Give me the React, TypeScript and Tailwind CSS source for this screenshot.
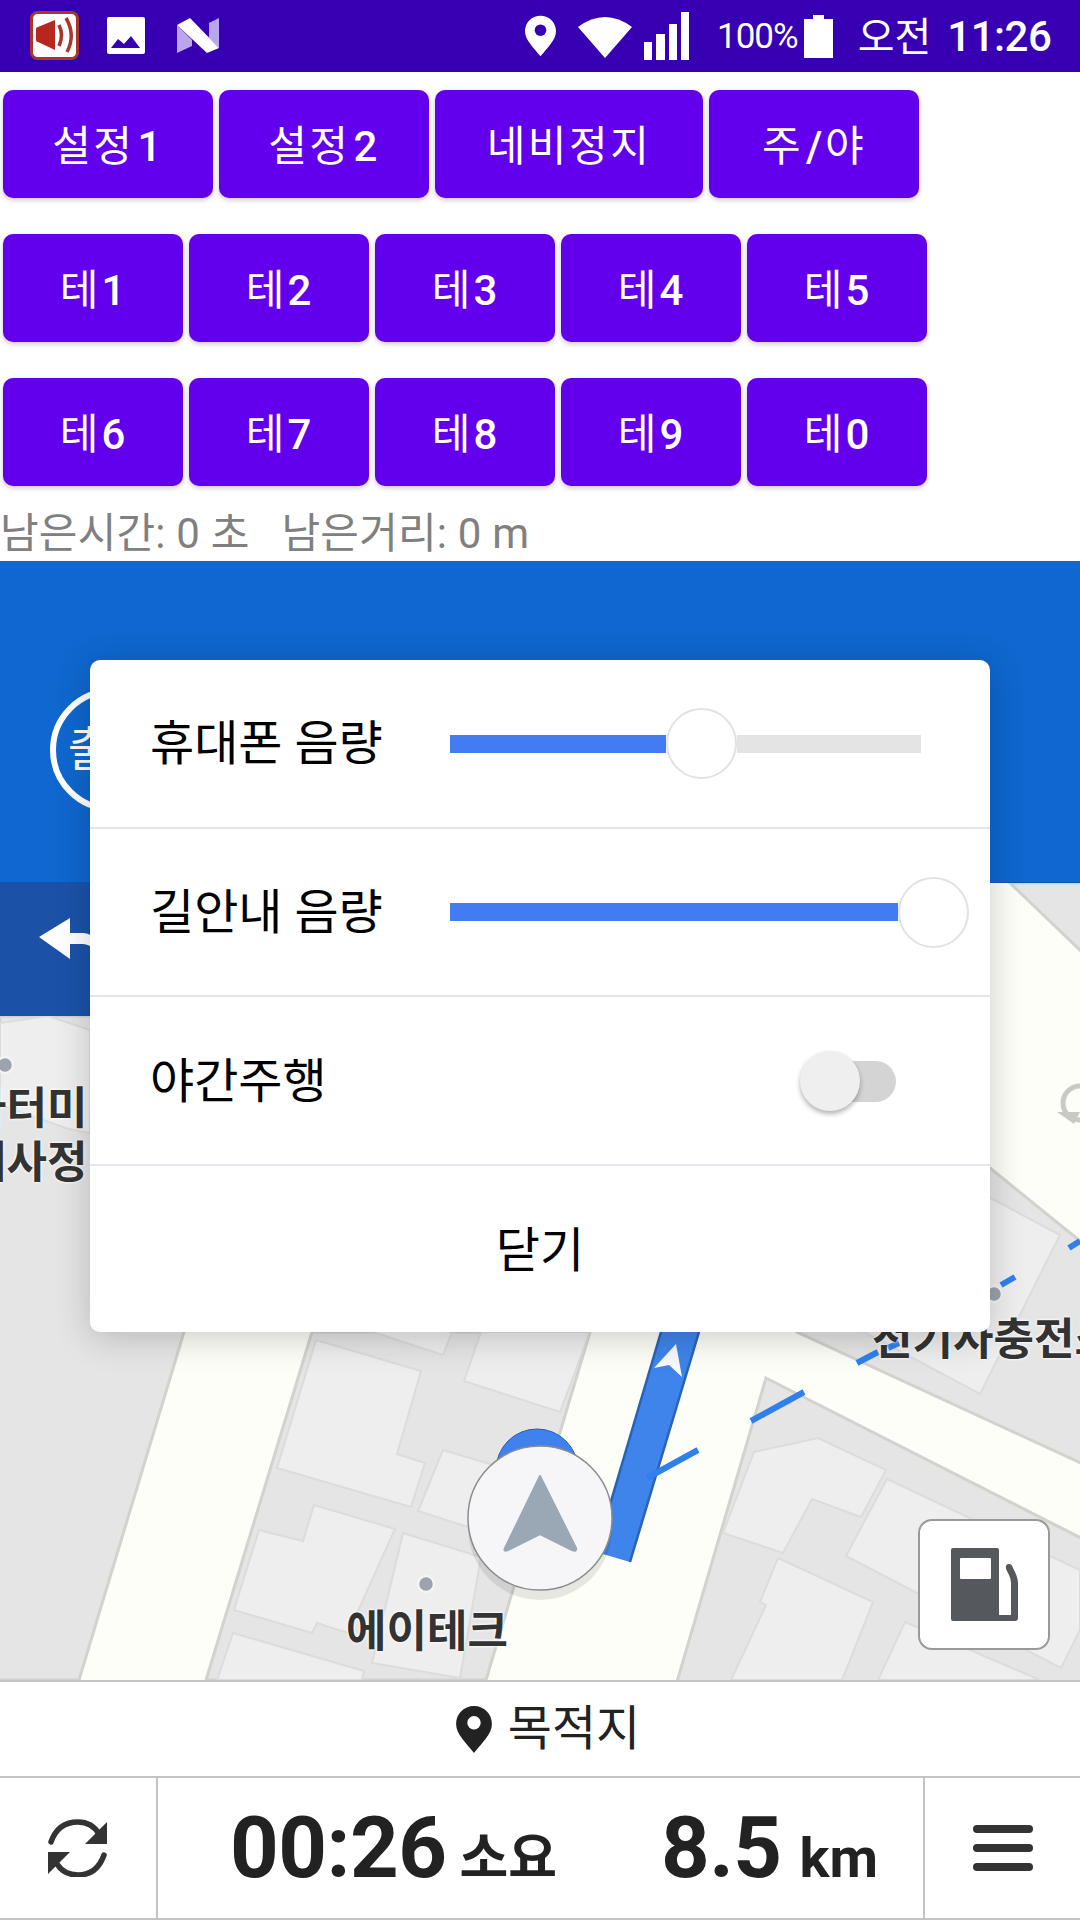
import type { ReactNode } from 'react'

const row1 = [
  { hangul: '설정', digit: '1', w: 'w-[210px]' },
  { hangul: '설정', digit: '2', w: 'w-[210px]' },
  { hangul: '네비정지', digit: '', w: 'w-[268px]' },
  { hangul: '주', digit: '/', tail: '야', w: 'w-[210px]' },
]
const row2 = ['1', '2', '3', '4', '5']
const row3 = ['6', '7', '8', '9', '0']

const buildings = [
  '316,1340 421,1371 397,1454 425,1463 411,1507 277,1468',
  '376,1333 443,1355 452,1332 376,1320',
  '481,1332 464,1381 560,1412 590,1332',
  '443,1450 500,1467 490,1534 418,1511',
  '314,1505 395,1529 348,1633 317,1623 312,1633 234,1610 259,1530 303,1541',
  '403,1533 481,1557 460,1678 372,1663',
  '233,1633 364,1671 362,1680 217,1680',
  '754,1452 818,1438 886,1470 861,1517 812,1499 783,1553 723,1533',
  '887,1479 1080,1570 1080,1630 1061,1668 846,1556',
  '905,1622 1040,1680 878,1680',
  '778,1558 873,1602 842,1680 731,1680 766,1605 760,1602',
  '900,1150 1060,1235 980,1394 860,1330',
  '0,1023 48,1016 90,1030 90,1133 69,1129 0,1105',
]

const blueDashes = [
  [751, 1421, 804, 1392],
  [647, 1478, 698, 1450],
  [857, 1363, 878, 1352],
  [888, 1348, 899, 1343],
  [1001, 1285, 1015, 1277],
  [1069, 1248, 1080, 1241],
]

function StatusIcons() {
  return (
    <svg viewBox="0 0 200 72" className="h-[72px] w-[200px]" aria-hidden="true">
      {/* speaker notification */}
      <rect x="1.5" y="12.5" width="46" height="46" rx="6" fill="#fff" stroke="#a8362c" strokeWidth="3" />
      <path d="M6 29q0-2 2-2l17-7v30l-17-8q-2 0-2-2z" fill="#b5271f" />
      <path d="M29 25q5 10 0 21M36 18q10 17 1 34" fill="none" stroke="#a8362c" strokeWidth="3.5" />
      {/* picture */}
      <rect x="77" y="17" width="38" height="37" rx="2" fill="#fff" />
      <path d="M81 48l7-9 6 5 7-8 9 12z" fill="#3700b3" />
      {/* N */}
      <path d="M147 25l15 15v6l-15 7z" fill="#b9a6ec" />
      <path d="M189 18v30l-10-10V23z" fill="#b9a6ec" />
      <path d="M147 25l13-7 29 30-12 5z" fill="#fff" />
    </svg>
  )
}

function PinIcon({ className, fill, hole }: { className: string; fill: string; hole: string }) {
  return (
    <svg viewBox="0 0 32 42" className={className} aria-hidden="true">
      <path d="M16 0C7 0 0 7 0 16c0 9 9 17 16 26 7-9 16-17 16-26C32 7 25 0 16 0z" fill={fill} />
      <circle cx="16" cy="15" r="6" fill={hole} />
    </svg>
  )
}

function StatusBar() {
  return (
    <div className="flex h-[72px] items-center bg-[#3700b3] pl-[30px] text-white">
      <StatusIcons />
      <div className="ml-[295px] flex items-center">
        <PinIcon className="h-[42px] w-[31px]" fill="#fff" hole="#3700b3" />
        <svg viewBox="0 0 54 43" className="ml-[22px] h-[43px] w-[54px]" aria-hidden="true">
          <path d="M0 12Q27-8 54 12L27 43z" fill="#fff" />
        </svg>
        <svg viewBox="0 0 45 48" className="ml-[12px] h-[48px] w-[45px]" aria-hidden="true">
          <path d="M0 30h8v18H0zM12 22h9v26h-9zM25 12h8v36h-8zM37 0h8v48h-8z" fill="#fff" />
        </svg>
        <span className="ml-[28px] text-[35px] leading-none tracking-[-1px]">100%</span>
        <svg viewBox="0 0 29 43" className="ml-[6px] h-[43px] w-[29px]" aria-hidden="true">
          <path d="M9 0h11v4h9v39H0V4h9z" fill="#fff" />
        </svg>
        <span className="ml-[25px] pt-[3px] text-[40px] leading-none">오전</span>
        <span className="ml-[16px] pt-[2px] text-[42px] font-medium leading-none tracking-[-0.5px]">11:26</span>
      </div>
    </div>
  )
}

function PurpleButton({ children, className }: { children: ReactNode; className: string }) {
  return (
    <div
      className={`flex h-[108px] items-center justify-center rounded-[10px] bg-[#6200ee] pt-[4px] text-[42px] text-white shadow-[0_2px_5px_rgba(0,0,0,0.22)] ${className}`}
    >
      {children}
    </div>
  )
}

function MapDrawing() {
  return (
    <svg viewBox="0 883 1080 797" className="absolute inset-0 h-full w-full" aria-hidden="true">
      <rect x="0" y="883" width="1080" height="797" fill="#fefef9" />

      {/* blocks between the roads */}
      <g fill="#e5e5e5" stroke="#d2d2ce" strokeWidth="3">
        <polygon points="0,1016 200,1016 184,1332 79,1680 -10,1680" />
        <polygon points="312,1332 590,1332 486,1680 206,1680" />
        <polygon points="766,1378 1085,1540 1085,1685 676,1685" />
        <polygon points="990,1168 1085,1245 1085,1465 797,1332 700,1168" />
        <polygon points="1010,883 1085,883 1085,955" />
      </g>
      <g fill="#eeeeee" stroke="#dcdcdc" strokeWidth="2">
        {buildings.map((pts) => (
          <polygon key={pts} points={pts} />
        ))}
      </g>

      {/* rotary mark on the right */}
      <circle cx="1080" cy="1103" r="17" fill="none" stroke="#c9cac5" strokeWidth="5" />
      <path d="M1057 1112l23 0-6 12z" fill="#c9cac5" />

      {/* poi dots */}
      <circle cx="5" cy="1065" r="8" fill="#9ca3af" stroke="#f4f4f4" strokeWidth="2.5" />
      <circle cx="994" cy="1294" r="8" fill="#9ca3af" stroke="#f4f4f4" strokeWidth="2.5" />
      <circle cx="426" cy="1584" r="8" fill="#9ca3af" stroke="#f4f4f4" strokeWidth="2.5" />

      {/* route */}
      <polygon points="661,1332 699,1332 630,1562 596,1552" fill="#3f84ea" />
      <path d="M661 1332L596 1552M699 1332L630 1562" stroke="#2863b8" strokeWidth="2.5" fill="none" />
      <path d="M676 1344l-22 24 15-3 13 12z" fill="#f8f9fc" />
      {blueDashes.map(([x1, y1, x2, y2]) => (
        <line key={x1} x1={x1} y1={y1} x2={x2} y2={y2} stroke="#2f80ed" strokeWidth="6" />
      ))}

      {/* current position */}
      <circle cx="537" cy="1470" r="41" fill="#3f82ee" stroke="#2a5db0" strokeWidth="1" />
      <circle cx="540" cy="1528" r="72" fill="#000" fillOpacity="0.09" />
      <circle cx="540" cy="1518" r="72" fill="#f6f6f8" stroke="#8c8c8c" strokeWidth="1.5" />
      <path
        d="M540 1476L576 1548Q577 1552 572 1550L540 1534L508 1550Q503 1552 505 1548z"
        fill="#9aa8b6"
        stroke="#9aa8b6"
        strokeWidth="2"
        strokeLinejoin="round"
      />
    </svg>
  )
}

function MapLabel({ text, className }: { text: string; className: string }) {
  return (
    <span
      className={`absolute whitespace-nowrap text-[44px] font-bold leading-none text-[#333] [text-shadow:0_0_3px_#fff,0_0_3px_#fff] ${className}`}
    >
      {text}
    </span>
  )
}

function FuelButton() {
  return (
    <div className="absolute left-[918px] top-[636px] flex h-[131px] w-[132px] items-center justify-center rounded-[14px] border-2 border-[#999] bg-white">
      <svg viewBox="0 0 67 74" className="h-[74px] w-[67px]" aria-hidden="true">
        <path
          d="M2 0h44a2 2 0 0 1 2 2v65h12V35q0-4-2-8l-3-6q-1-5 3-5 3 0 4 4 5 9 5 15v35a3 3 0 0 1-3 3H2a2 2 0 0 1-2-2V2a2 2 0 0 1 2-2z"
          fill="#55585d"
        />
        <rect x="9" y="10" width="31" height="21" rx="1" fill="#fff" />
      </svg>
    </div>
  )
}

function VolumeSlider({ fill, label, rest, height }: { fill: string; label: string; rest: boolean; height: string }) {
  return (
    <div className={`flex items-center border-b-2 border-[#e2e4ee] pl-[60px] ${height}`}>
      <span className="w-[300px] pt-[1px] text-[48px] leading-none text-black">{label}</span>
      <div className="flex w-[471px] items-center">
        <div className={`h-[18px] bg-[#437bf2] ${fill}`} />
        <div className="h-[71px] w-[71px] shrink-0 rounded-full border-2 border-[#e2e2e2] bg-white" />
        {rest && <div className="h-[18px] flex-1 bg-[#e4e4e4]" />}
      </div>
    </div>
  )
}

function SoundDialog() {
  return (
    <div className="absolute left-[90px] top-[660px] h-[672px] w-[900px] rounded-[10px] bg-white shadow-[0_6px_36px_rgba(0,0,0,0.2)]">
      <VolumeSlider label="휴대폰 음량" fill="w-[216px]" rest height="h-[169px]" />
      <VolumeSlider label="길안내 음량" fill="w-[448px] shrink-0" rest={false} height="h-[168px]" />
      <div className="flex h-[169px] items-center border-b-2 border-[#e6e7ee] pl-[60px]">
        <span className="w-[300px] pt-[2px] text-[48px] leading-none text-black">야간주행</span>
        <div className="relative ml-[350px] h-[60px] w-[96px]">
          <div className="absolute right-0 top-[10px] h-[41px] w-[84px] rounded-full bg-[#d4d4d4]" />
          <div className="absolute left-0 top-0 h-[60px] w-[60px] rounded-full bg-[#efefef] shadow-[0_3px_5px_rgba(0,0,0,0.3)]" />
        </div>
      </div>
      <div className="flex h-[166px] items-center justify-center pt-[3px] text-[48px] leading-none text-black">닫기</div>
    </div>
  )
}

export default function App() {
  return (
    <div className="relative h-[1920px] w-[1080px] overflow-hidden bg-white font-[Roboto,'Noto_Sans_CJK_KR',sans-serif]">
      <StatusBar />

      <div className="mt-[18px] flex gap-[6px] pl-[3px] tracking-[2.5px]">
        {row1.map((b) => (
          <PurpleButton key={b.hangul + b.digit + b.w} className={b.w}>
            {b.hangul}
            {b.digit && <span className="ml-[3px] font-medium">{b.digit}</span>}
            {b.tail}
          </PurpleButton>
        ))}
      </div>
      <div className="mt-[36px] flex gap-[6px] pl-[3px] tracking-[1px]">
        {row2.map((d) => (
          <PurpleButton key={d} className="w-[180px]">
            테<span className="ml-[2px] font-medium">{d}</span>
          </PurpleButton>
        ))}
      </div>
      <div className="mt-[36px] flex gap-[6px] pl-[3px] tracking-[1px]">
        {row3.map((d) => (
          <PurpleButton key={d} className="w-[180px]">
            테<span className="ml-[2px] font-medium">{d}</span>
          </PurpleButton>
        ))}
      </div>

      <div className="flex h-[75px] items-end text-[42px] leading-[54px] tracking-[0.2px] whitespace-pre text-[#808080]">
        {'남은시간: 0 초   남은거리: 0 m'}
      </div>

      {/* guidance header */}
      <div className="flex h-[322px] items-start border-b border-[#0c57b0] bg-[#0f67cf] pl-[50px] pt-[127px]">
        <div className="flex h-[124px] w-[124px] items-center justify-center rounded-full border-[6px] border-white text-[48px] leading-none text-white">
          출구
        </div>
      </div>

      {/* map */}
      <div className="relative h-[797px] overflow-hidden">
        <MapDrawing />
        <div className="absolute left-0 top-0 flex h-[133px] w-[300px] items-start bg-[#1b52a8] pl-[39px] pt-[35px]">
          <svg viewBox="0 0 60 41" className="h-[41px] w-[60px]" aria-hidden="true">
            <path d="M0 19L31 0V15H44Q52 15 56 22V32Q50 26 44 26H31V41z" fill="#fff" />
          </svg>
        </div>
        <MapLabel text="가터미널" className="left-[-34px] top-[204px]" />
        <MapLabel text="대사정" className="left-[-34px] top-[258px]" />
        <MapLabel text="전기사충전소" className="left-[872px] top-[435px]" />
        <MapLabel text="에이테크" className="left-[346px] top-[727px]" />
        <FuelButton />
      </div>

      {/* destination */}
      <div className="flex h-[98px] items-center justify-center gap-[16px] border-y-2 border-[#c4c4c4] pl-[16px] text-[#222]">
        <PinIcon className="h-[47px] w-[36px]" fill="#222" hole="#fff" />
        <span className="text-[48px] leading-none">목적지</span>
      </div>

      {/* trip summary */}
      <div className="flex h-[142px] border-b-2 border-[#c4c4c4] text-[#222]">
        <div className="flex w-[158px] items-center justify-center border-r-2 border-[#c4c4c4]">
          <svg viewBox="18 18 60 58" className="h-[58px] w-[60px]" aria-hidden="true">
            <path d="M21 41Q28 21 48 21Q62 21 69 33" fill="none" stroke="#333" strokeWidth="5.5" strokeLinecap="round" />
            <path d="M77 21V43H55z" fill="#333" />
            <path d="M74 54Q67 74 48 74Q34 74 27 63" fill="none" stroke="#333" strokeWidth="5.5" strokeLinecap="round" />
            <path d="M18 51H40L18 73z" fill="#333" />
          </svg>
        </div>
        <div className="flex flex-1 items-baseline justify-between pl-[72px] pr-[45px] pt-[20px] font-bold">
          <div className="flex items-baseline gap-[13px]">
            <span className="text-[85px] leading-[100px] tracking-[-0.5px]">00:26</span>
            <span className="text-[53px] leading-none">소요</span>
          </div>
          <div className="flex items-baseline gap-[18px]">
            <span className="text-[85px] leading-[100px] tracking-[-0.5px]">8.5</span>
            <span className="text-[56px] leading-none">km</span>
          </div>
        </div>
        <div className="flex w-[157px] flex-col items-center justify-center gap-[11px] border-l-2 border-[#c4c4c4]">
          <div className="h-[8px] w-[60px] rounded-full bg-[#333]" />
          <div className="h-[8px] w-[60px] rounded-full bg-[#333]" />
          <div className="h-[8px] w-[60px] rounded-full bg-[#333]" />
        </div>
      </div>

      <SoundDialog />
    </div>
  )
}
